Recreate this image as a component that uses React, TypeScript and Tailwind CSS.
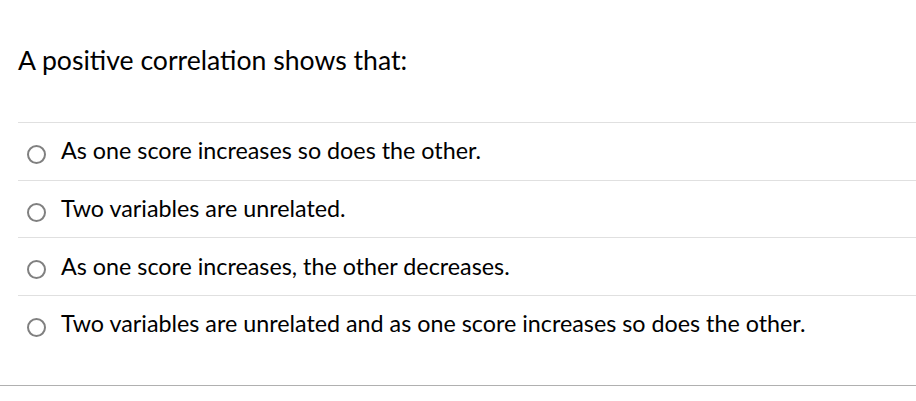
export default function App() {
  const options = [
    "As one score increases so does the other.",
    "Two variables are unrelated.",
    "As one score increases, the other decreases.",
    "Two variables are unrelated and as one score increases so does the other.",
  ];

  return (
    <main
      className="w-[916px] h-[401px] bg-white text-black overflow-hidden"
      style={{ fontFamily: "Lato, 'Open Sans', sans-serif" }}
    >
      <div className="pl-[18px]">
        {/* 질문 */}
        <h2 className="pt-[43px] h-[122px] text-[26.6px] leading-[34px] font-normal">
          A positive correlation shows that:
        </h2>

        {/* 보기 */}
        <ul>
          {options.map((text) => (
            <li
              key={text}
              className="h-[57.7px] border-t border-[#e0e0e0] flex items-center pl-[9px] gap-[15px]"
            >
              <span className="w-[19px] h-[19px] mt-[6px] rounded-full border-2 border-[#808080] bg-white shrink-0" />
              <span className="text-[23.3px] leading-[28px] pb-[2px]">{text}</span>
            </li>
          ))}
        </ul>
      </div>

      <div className="mt-[32px] border-t border-[#b0b0b0]" />
    </main>
  );
}
